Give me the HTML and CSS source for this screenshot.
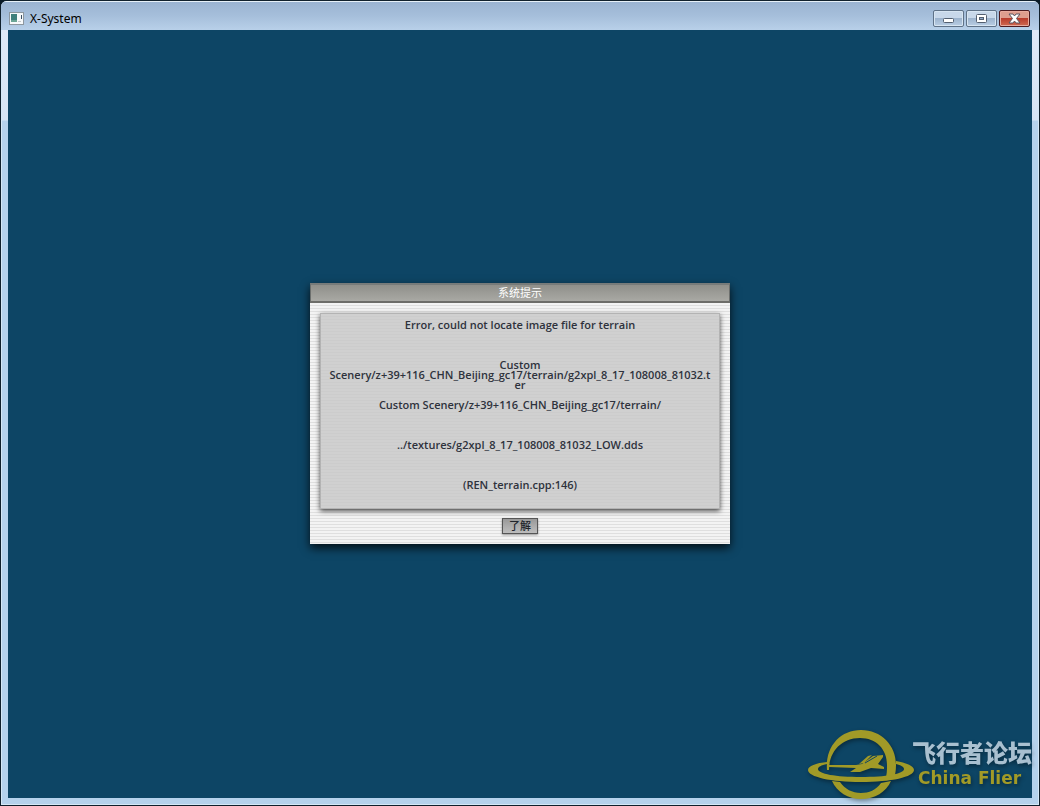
FILE: index.html
```
<!DOCTYPE html>
<html lang="zh-CN">
<head>
  <meta charset="UTF-8" />
  <meta name="viewport" content="width=device-width, initial-scale=1.0"/>
  <title>X-System</title>
  <link rel="stylesheet" href="styles.css">
</head>
<body>
  <div class="window">
    <header class="titlebar">
      <svg class="app-icon" width="16" height="13" viewBox="0 0 16 13">
        <rect x="0.5" y="0.5" width="14" height="12" fill="#f6f9fb" stroke="#8d979f"/>
        <rect x="2" y="2" width="6" height="8" fill="#3f7f7c"/>
        <path d="M2 8h6v2H2z" fill="#6aa596"/>
        <path d="M12 3h1v4h-1z" fill="#3c5064"/>
        <path d="M9 9h3v1H9z" fill="#c1c6ca"/>
      </svg>
      <h1 class="title">X-System</h1>
      <div class="window-buttons">
        <button class="win-btn" aria-label="最小化">
          <svg width="30" height="16" viewBox="0 0 30 16"><rect x="10.500" y="8.500" width="10" height="4" rx="1" fill="#fff" stroke="#535f70"/></svg>
        </button>
        <button class="win-btn" aria-label="最大化">
          <svg width="30" height="16" viewBox="0 0 30 16"><rect x="10.500" y="4.500" width="10" height="8" rx="1" fill="#fff" stroke="#535f70"/><rect x="13.500" y="7.500" width="4" height="2" fill="#90a9c8" stroke="#535f70"/></svg>
        </button>
        <button class="win-btn close" aria-label="关闭">
          <svg width="30" height="16" viewBox="0 0 30 16"><path d="M10 4h4l1.500 2L17 4h4l-3.500 4.500L21 13h-4l-1.500-2-1.500 2h-4l3.500-4.500z" fill="#fff" stroke="#5c5560"/></svg>
        </button>
      </div>
    </header>

    <main class="screen">
      <section class="dialog" role="alertdialog" aria-labelledby="dialogTitle">
        <h2 class="dialog-title" id="dialogTitle">系统提示</h2>
        <div class="dialog-body">
          <div class="message">
            <p>Error, could not locate image file for terrain</p>
            <p class="path">Custom<br>Scenery/z+39+116_CHN_Beijing_gc17/terrain/g2xpl_8_17_108008_81032.ter</p>
            <p>Custom Scenery/z+39+116_CHN_Beijing_gc17/terrain/</p>
            <p>../textures/g2xpl_8_17_108008_81032_LOW.dds</p>
            <p>(REN_terrain.cpp:146)</p>
          </div>
          <button class="ok-btn">了解</button>
        </div>
      </section>
    </main>

    <div class="watermark">
      <svg class="logo" width="106" height="72" viewBox="0 0 106 72">
        <g fill="#a19a27">
          <path d="M19 41C17 18 32 1 53 1c20 0 35 15 35 35 0 6-1 10-2 14l-9 1c2-5 2-10 2-15C79 20 68 9 52 9 34 9 21 22 21 41z"/>
          <path d="M24 52l8 1c5 7 12 11 21 11 8 0 15-3 20-10l10-2c-5 11-16 18-30 18-13 0-24-7-29-18z"/>
          <path d="M19 33C8 34 0 37 0 41c0 7 23 12 53 12s53-5 53-12c0-4-7-7-18-9v3c5 1 8 3 8 5 0 5-18 8-43 8S10 45 10 40c0-2 3-4 9-5z"/>
          <path d="M21 36h27l6-1 11-8 10-1v2l-5 7 6 3v2l-13-1-11 4H42l6-4-27-1z"/>
          <path d="M51 35l9-8 4-1-8 8z"/>
        </g>
        <path d="M57 34l12-7" fill="none" stroke="#0d4565"/>
      </svg>
      <div class="brand">
        <span class="brand-cn">飞行者论坛</span>
        <span class="brand-en">China Flier</span>
      </div>
    </div>
  </div>
</body>
</html>
```
FILE: styles.css
```
* {
  box-sizing: border-box;
}
body {
  margin: 0;
  background: #0a1a26;
  font-family: "Noto Sans", "Noto Sans CJK SC", sans-serif;
}
h1, h2, p {
  margin: 0;
}

/* window frame */
.window {
  position: relative;
  display: flex;
  flex-direction: column;
  min-height: 100vh;
  padding: 0 7px 7px;
  border: 1px solid #10202c;
  border-radius: 7px 7px 0 0;
  background: linear-gradient(#c4d8ec 0, #dfe9f6 30px, #d6e5f5 119px, #b5d2ec 120px);
  box-shadow: inset 0 0 0 1px #d5e8f6;
  overflow: hidden;
}
.titlebar {
  display: flex;
  align-items: center;
  height: 29px;
  margin: 0 -7px;
  padding: 4px 9px 0 8px;
  border-top: 1px solid #e6f0f8;
  background: linear-gradient(#9ab3d1, #a6bfdb 50%, #b8d0e9);
}
.title {
  flex: 1;
  margin-left: 5px;
  padding-top: 1px;
  font-size: 12px;
  font-weight: 400;
  line-height: 16px;
  color: #000;
}
.window-buttons {
  display: flex;
  gap: 2px;
}
.win-btn {
  width: 31px;
  height: 17px;
  padding: 0;
  border: 1px solid #5f7288;
  border-radius: 2px;
  background: linear-gradient(#c8d8ea 45%, #9db4ce 50%, #b9cee4);
  box-shadow: inset 0 0 0 1px #d7e5f2;
}
.win-btn svg {
  display: block;
  margin: -1px 0 0 -1px;
}
.win-btn.close {
  border-color: #4c1b20;
  background: linear-gradient(#de9d8e 45%, #b93c2c 50%, #cf6a52);
  box-shadow: inset 0 0 0 1px #e8aa9d;
}

/* client area */
.screen {
  flex: 1;
  display: grid;
  place-items: center;
  padding-bottom: 1px;
  background: #0d4565;
}
.dialog {
  width: 420px;
  max-width: 100%;
  box-shadow: 0 4px 9px rgba(0, 0, 0, 0.8);
}
.dialog-title {
  height: 20px;
  border: 1px solid #6c6f6d;
  border-top: 2px solid #777b7a;
  border-bottom: 2px solid #6d6d69;
  background: linear-gradient(#8f8f8a, #a9a9a4);
  color: #fff;
  font-size: 11px;
  font-weight: 400;
  line-height: 16px;
  text-align: center;
}
.dialog-body {
  display: flex;
  flex-direction: column;
  align-items: center;
  gap: 9px;
  padding: 10px;
  background: repeating-linear-gradient(#f3f3f3 0, #f3f3f3 2px, #dfdfdf 2px, #dfdfdf 3px);
}
.message {
  display: flex;
  flex-direction: column;
  gap: 30px;
  width: 100%;
  padding: 6px 8px 18px;
  border: 1px solid #b3b3b3;
  background: repeating-linear-gradient(#d0d0d0 0, #d0d0d0 2px, #cccccc 2px, #cccccc 3px);
  box-shadow: 0 2px 5px rgba(0, 0, 0, 0.7);
  color: #2e323c;
  font-family: "Open Sans", sans-serif;
  font-size: 11px;
  font-weight: 600;
  line-height: 10px;
  text-align: center;
}
.path {
  margin-bottom: -20px;
  word-break: break-all;
}
.ok-btn {
  width: 36px;
  height: 16px;
  padding: 0;
  border: 1px solid #555;
  background: linear-gradient(#999, #bdbdbd);
  box-shadow: 0 1px 2px rgba(0, 0, 0, 0.4);
  color: #20252c;
  font-family: inherit;
  font-size: 11px;
  font-weight: 500;
  line-height: 14px;
}

/* forum watermark, lies over the corner of the window */
.watermark {
  position: absolute;
  right: 7px;
  bottom: 4px;
  display: flex;
  align-items: center;
  gap: 1px;
  filter: drop-shadow(1px 2px 2px rgba(0, 0, 0, 0.4));
}
.logo {
  margin-right: -3px;
}
.brand {
  white-space: nowrap;
}
.brand-cn, .brand-en {
  display: block;
}
.brand-cn {
  color: #a9c0d0;
  font-family: "Noto Sans CJK SC", sans-serif;
  font-size: 24px;
  font-weight: 900;
  line-height: 26px;
}
.brand-en {
  padding-left: 6px;
  color: #a19a27;
  font-family: "DejaVu Sans", sans-serif;
  font-size: 17px;
  font-weight: 700;
  line-height: 26px;
}
```
